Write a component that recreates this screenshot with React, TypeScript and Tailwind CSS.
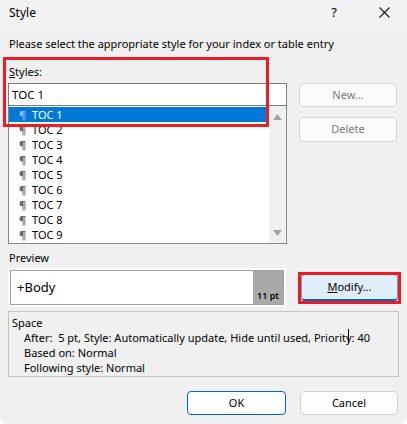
import React from "react";

const rows = ["TOC 1", "TOC 2", "TOC 3", "TOC 4", "TOC 5", "TOC 6", "TOC 7", "TOC 8", "TOC 9"];

function ListRow({ label, selected }: { label: string; selected?: boolean }) {
  return (
    <div
      className={
        "flex h-[15px] items-center pl-[10px] leading-[15px] " +
        (selected ? "bg-[#0078d7] text-white" : "text-black")
      }
    >
      <span className={"w-[13px] text-[11px] font-bold " + (selected ? "text-[#86b9e6]" : "text-[#6a6a6a]")}>¶</span>
      <span className="text-[11px]">{label}</span>
    </div>
  );
}

export default function App() {
  return (
    <div
      className="relative h-[424px] w-[407px] overflow-hidden rounded-b-[8px] bg-[#f0f0f0] text-[11px] text-black"
      style={{ fontFamily: '"Segoe UI", "Noto Sans", "Liberation Sans", sans-serif' }}
    >
      {/* title bar */}
      <div className="flex h-[25px] items-center bg-[#f3f2f3] pl-[9px] text-[12px]">
        <span className="flex-1">Style</span>
        <span className="w-[54px] text-center text-[13px]">?</span>
        <span className="flex w-[46px] justify-center">
          <svg width="11" height="11" viewBox="0 0 11 11" fill="none" stroke="#1a1a1a" strokeWidth="1.1">
            <path d="M0.5 0.5 L10.5 10.5 M10.5 0.5 L0.5 10.5" />
          </svg>
        </span>
      </div>

      <div className="px-[9px] pt-[11px] leading-[15px]">Please select the appropriate style for your index or table entry</div>

      <div className="flex pl-[8px]">
        {/* left column */}
        <div className="w-[279px]">
          <div className="mt-[10px] pl-[1px] leading-[22px]">
            <span className="underline">S</span>tyles:
          </div>
          <div className="flex h-[23px] items-center border border-[#7a7a7a] bg-white pl-[3px] text-[11.5px]">TOC 1</div>
          <div className="flex h-[138px] border border-t-0 border-[#828790] bg-white">
            <div className="flex-1 pt-[1px]">
              {rows.map((r, i) => (
                <ListRow key={r} label={r} selected={i === 0} />
              ))}
            </div>
            <div className="flex w-[17px] flex-col items-center justify-between bg-[#f0f0f0] pb-[7px] pt-[8px]">
              <svg width="9" height="6" viewBox="0 0 9 6">
                <path d="M4.5 0 L9 6 L0 6 Z" fill="#a3a3a3" />
              </svg>
              <svg width="9" height="6" viewBox="0 0 9 6">
                <path d="M0 0 L9 0 L4.5 6 Z" fill="#a3a3a3" />
              </svg>
            </div>
          </div>

          <div className="mt-[6px] pl-[1px] leading-[15px]">Preview</div>
          <div className="mt-[3px] h-[39px] w-[278px] bg-white p-[2px]">
            <div className="flex h-full border border-[#a0a0a0]">
              <div className="flex flex-1 items-center pl-[6px] text-[13px]">+Body</div>
              <div className="flex w-[30px] items-end justify-center bg-[#a9a9a9] pb-[4px] text-[9px] font-semibold leading-none">
                11 pt
              </div>
            </div>
          </div>
        </div>

        {/* right column */}
        <div className="ml-[12px] flex w-[98px] flex-col">
          <div className="mt-[32px] flex h-[24px] items-center justify-center rounded-[4px] border border-[#d6d6d6] bg-[#fbfbfb] text-[#7a7a7a]">
            New...
          </div>
          <div className="mt-[10px] flex h-[25px] items-center justify-center rounded-[4px] border border-[#d6d6d6] bg-[#fbfbfb] text-[#7a7a7a]">
            Delete
          </div>
          <div className="ml-[2px] mt-[132px] flex h-[27px] w-[97px] items-center justify-center rounded-[4px] border border-b-2 border-[#6aa3d8] border-b-[#0067c0] bg-[#e0eef9]">
            <span>
              <span className="underline">M</span>odify...
            </span>
          </div>
        </div>
      </div>

      {/* description */}
      <div className="relative mx-[8px] mt-[4px] h-[66px] border border-[#c4c4c4] bg-[#f0f0f0] pl-[3px] pt-[3px] leading-[15px]">
        <div>Space</div>
        <div className="pl-[12px]">After:&nbsp; 5 pt, Style: Automatically update, Hide until used, Priority: 40</div>
        <div className="pl-[12px]">Based on: Normal</div>
        <div className="pl-[12px]">Following style: Normal</div>
        <div className="absolute left-[339px] top-[17px] h-[14px] w-[1px] bg-black" />
      </div>

      {/* bottom buttons */}
      <div className="mt-[14px] flex justify-end gap-[14px] pr-[9px]">
        <div className="flex h-[24px] w-[99px] items-center justify-center rounded-[4px] border border-[#0067c0] bg-[#fdfdfd]">OK</div>
        <div className="flex h-[24px] w-[98px] items-center justify-center rounded-[4px] border border-[#d0d0d0] bg-[#fdfdfd]">Cancel</div>
      </div>

      {/* red highlight boxes */}
      <div className="pointer-events-none absolute left-[3px] top-[57px] h-[70px] w-[266px] border-[3px] border-[#ed1c24]" />
      <div className="pointer-events-none absolute left-[298px] top-[272px] h-[32px] w-[103px] border-[3px] border-[#ed1c24]" />
    </div>
  );
}
